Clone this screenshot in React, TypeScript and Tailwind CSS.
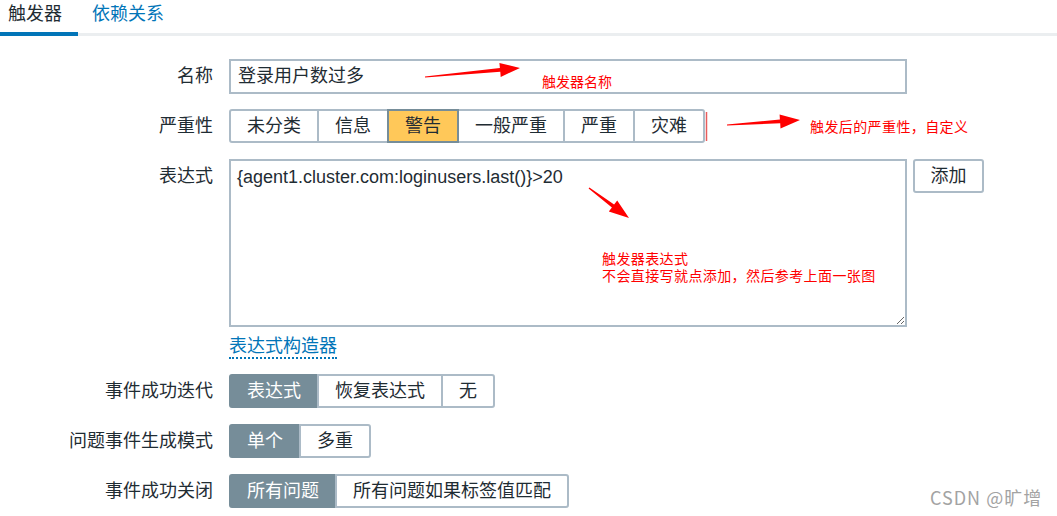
import React from 'react'

type Pt = [number, number]

function Arrow({ from, to, head = 20, wing = 7 }: { from: Pt; to: Pt; head?: number; wing?: number }) {
  const dx = to[0] - from[0]
  const dy = to[1] - from[1]
  const len = Math.hypot(dx, dy)
  const ux = dx / len
  const uy = dy / len
  const nx = -uy
  const ny = ux
  const bx = to[0] - ux * head
  const by = to[1] - uy * head
  const p = (x: number, y: number) => `${x.toFixed(1)},${y.toFixed(1)}`
  const pts = [
    p(from[0] + nx * 0.6, from[1] + ny * 0.6),
    p(bx + nx * 1.8, by + ny * 1.8),
    p(bx + nx * wing, by + ny * wing),
    p(to[0], to[1]),
    p(bx - nx * wing, by - ny * wing),
    p(bx - nx * 1.8, by - ny * 1.8),
    p(from[0] - nx * 0.6, from[1] - ny * 0.6),
  ].join(' ')
  return <polygon points={pts} fill="#ff0000" />
}

function Segmented({
  items,
  active,
  activeClass,
}: {
  items: string[]
  active: number
  activeClass: string
}) {
  return (
    <div className="flex">
      {items.map((t, i) => (
        <div
          key={t}
          className={
            'h-[34px] px-[16px] flex items-center border-2 whitespace-nowrap ' +
            (i > 0 ? '-ml-[2px] ' : 'rounded-l-[3px] ') +
            (i === items.length - 1 ? 'rounded-r-[3px] ' : '') +
            (i === active ? activeClass : 'bg-white border-[#acbbc7]')
          }
        >
          {t}
        </div>
      ))}
    </div>
  )
}

function Row({ label, children, top = false }: { label: string; children: React.ReactNode; top?: boolean }) {
  return (
    <div className={'flex ' + (top ? 'items-start' : 'items-center')}>
      <div className="w-[213px] h-[34px] flex items-center justify-end whitespace-nowrap">{label}</div>
      <div className="ml-[16px] flex items-start">{children}</div>
    </div>
  )
}

export default function App() {
  return (
    <div className="relative w-[1057px] h-[516px] overflow-hidden bg-white text-[18px] text-[#1f2c33] font-['Liberation_Sans','Noto_Sans_CJK_SC',sans-serif]">
      {/* tabs */}
      <div className="flex h-[36px] border-b-[3px] border-[#ebeef0]">
        <div className="px-[8px] w-[78px] h-[36px] leading-[28px] border-b-4 border-[#0275b8] text-[#1f2c33]">
          触发器
        </div>
        <div className="pl-[14px] leading-[28px] text-[#0275b8]">依赖关系</div>
      </div>

      <div className="flex flex-col pt-[23px]">
        <Row label="名称">
          <div className="w-[678px] h-[35px] border-2 border-[#acbbc7] px-[7px] flex items-center">
            登录用户数过多
          </div>
        </Row>

        <div className="mt-[15px]">
          <Row label="严重性">
            <Segmented
              items={['未分类', '信息', '警告', '一般严重', '严重', '灾难']}
              active={2}
              activeClass="bg-[#ffc859] border-[#768d99] relative z-10"
            />
          </Row>
        </div>

        <div className="mt-[16px]">
          <Row label="表达式" top>
            <textarea
              readOnly
              defaultValue="{agent1.cluster.com:loginusers.last()}>20"
              className="block w-[678px] h-[168px] border-2 border-[#acbbc7] px-[6px] py-[4px] leading-[24px] text-[18px] text-[#1f2c33] outline-none resize font-['Liberation_Sans','Noto_Sans_CJK_SC',sans-serif]"
            />
            <div className="ml-[6px] w-[71px] h-[34px] border-2 border-[#acbbc7] rounded-[3px] flex items-center justify-center">
              添加
            </div>
          </Row>
        </div>

        <div className="mt-[8px] pl-[229px] flex">
          <span className="block leading-[22px] text-[#0275b8] border-b-2 border-dotted border-[#0275b8]">
            表达式构造器
          </span>
        </div>

        <div className="mt-[15px]">
          <Row label="事件成功迭代">
            <Segmented
              items={['表达式', '恢复表达式', '无']}
              active={0}
              activeClass="bg-[#768d99] border-[#768d99] text-white"
            />
          </Row>
        </div>

        <div className="mt-[16px]">
          <Row label="问题事件生成模式">
            <Segmented items={['单个', '多重']} active={0} activeClass="bg-[#768d99] border-[#768d99] text-white" />
          </Row>
        </div>

        <div className="mt-[16px]">
          <Row label="事件成功关闭">
            <Segmented
              items={['所有问题', '所有问题如果标签值匹配']}
              active={0}
              activeClass="bg-[#768d99] border-[#768d99] text-white"
            />
          </Row>
        </div>
      </div>

      {/* annotations */}
      <svg className="absolute inset-0 pointer-events-none" width="1057" height="516">
        <Arrow from={[425, 77]} to={[520, 68]} />
        <Arrow from={[727, 125]} to={[800, 120]} />
        <Arrow from={[589, 188]} to={[629, 218]} />
        <line x1="706.5" y1="112" x2="706.5" y2="141" stroke="#e85c5c" strokeWidth="1.5" />
      </svg>
      <div className="absolute left-[542px] top-[73px] text-[14px] leading-[17px] text-[#ff0000] font-['Noto_Sans_CJK_SC',sans-serif]">
        触发器名称
      </div>
      <div className="absolute left-[810px] top-[118px] text-[14px] leading-[17px] tracking-[0.4px] text-[#ff0000] font-['Noto_Sans_CJK_SC',sans-serif]">
        触发后的严重性，自定义
      </div>
      <div className="absolute left-[602px] top-[250px] text-[14px] leading-[17px] tracking-[0.4px] text-[#ff0000] font-['Noto_Sans_CJK_SC',sans-serif]">
        <div>触发器表达式</div>
        <div>不会直接写就点添加，然后参考上面一张图</div>
      </div>
      <div className="absolute left-[930px] top-[485px] text-[18px] leading-[24px] tracking-[1px] text-[#a3a3a3] font-['Noto_Sans_CJK_SC',sans-serif]">
        CSDN @旷增
      </div>
    </div>
  )
}
